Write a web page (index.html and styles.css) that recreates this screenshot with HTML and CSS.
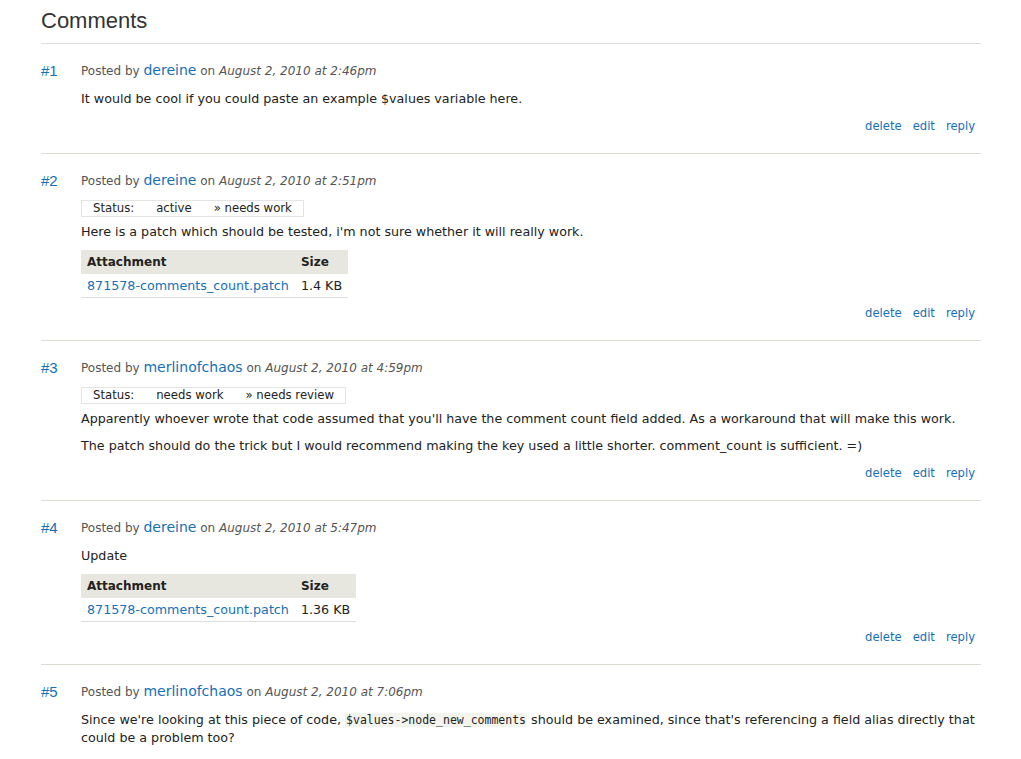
FILE: index.html
```html
<!DOCTYPE html>
<html>
<head>
<meta charset="utf-8">
<title>Comments</title>
<link rel="stylesheet" href="styles.css">
</head>
<body>
<div class="page">
  <h2 class="title">Comments</h2>

  <div class="comment">
    <a class="num" href="#">#1</a>
    <div class="content">
      <div class="meta">Posted by <a class="user" href="#">dereine</a> on <em>August 2, 2010 at 2:46pm</em></div>
      <p>It would be cool if you could paste an example $values variable here.</p>
      <ul class="links"><li><a href="#">delete</a></li><li><a href="#">edit</a></li><li><a href="#">reply</a></li></ul>
    </div>
  </div>

  <div class="comment">
    <a class="num" href="#">#2</a>
    <div class="content">
      <div class="meta">Posted by <a class="user" href="#">dereine</a> on <em>August 2, 2010 at 2:51pm</em></div>
      <table class="status"><tr><td>Status:</td><td>active</td><td>» needs work</td></tr></table>
      <p>Here is a patch which should be tested, i'm not sure whether it will really work.</p>
      <table class="files">
        <thead><tr><th>Attachment</th><th>Size</th></tr></thead>
        <tbody><tr><td><a href="#">871578-comments_count.patch</a></td><td>1.4 KB</td></tr></tbody>
      </table>
      <ul class="links"><li><a href="#">delete</a></li><li><a href="#">edit</a></li><li><a href="#">reply</a></li></ul>
    </div>
  </div>

  <div class="comment">
    <a class="num" href="#">#3</a>
    <div class="content">
      <div class="meta">Posted by <a class="user" href="#">merlinofchaos</a> on <em>August 2, 2010 at 4:59pm</em></div>
      <table class="status"><tr><td>Status:</td><td>needs work</td><td>» needs review</td></tr></table>
      <p>Apparently whoever wrote that code assumed that you'll have the comment count field added. As a workaround that will make this work.</p>
      <p>The patch should do the trick but I would recommend making the key used a little shorter. comment_count is sufficient. =)</p>
      <ul class="links"><li><a href="#">delete</a></li><li><a href="#">edit</a></li><li><a href="#">reply</a></li></ul>
    </div>
  </div>

  <div class="comment">
    <a class="num" href="#">#4</a>
    <div class="content">
      <div class="meta">Posted by <a class="user" href="#">dereine</a> on <em>August 2, 2010 at 5:47pm</em></div>
      <p>Update</p>
      <table class="files">
        <thead><tr><th>Attachment</th><th>Size</th></tr></thead>
        <tbody><tr><td><a href="#">871578-comments_count.patch</a></td><td>1.36 KB</td></tr></tbody>
      </table>
      <ul class="links"><li><a href="#">delete</a></li><li><a href="#">edit</a></li><li><a href="#">reply</a></li></ul>
    </div>
  </div>

  <div class="comment">
    <a class="num" href="#">#5</a>
    <div class="content">
      <div class="meta">Posted by <a class="user" href="#">merlinofchaos</a> on <em>August 2, 2010 at 7:06pm</em></div>
      <p>Since we're looking at this piece of code, <code>$values-&gt;node_new_comments</code> should be examined, since that's referencing a field alias directly that could be a problem too?</p>
    </div>
  </div>
</div>
</body>
</html>
```

FILE: styles.css
```css
html, body {
  margin: 0;
  padding: 0;
  background: #fff;
}

body {
  font-family: "DejaVu Sans", "Liberation Sans", sans-serif;
  font-size: 12.7px;
  line-height: 18px;
  color: #222;
}

a {
  color: #1570b8;
  text-decoration: none;
}

.page {
  width: 940px;
  margin-left: 41px;
}

.title {
  margin: 0;
  padding: 8px 0 9px;
  font-family: "Liberation Sans", Arial, sans-serif;
  font-size: 22px;
  line-height: 26px;
  font-weight: normal;
  color: #333;
  border-bottom: 1px solid #ddd;
}

.comment {
  display: flex;
  padding: 18px 0 18px;
  border-bottom: 1px solid #dcdcd4;
}

.comment:last-child {
  border-bottom: none;
}

.num {
  flex: 0 0 40px;
  font-family: "Liberation Sans", Arial, sans-serif;
  font-size: 15px;
  line-height: 18px;
}

.content {
  flex: 1;
  min-width: 0;
}

.meta {
  color: #555;
  font-size: 12px;
  line-height: 19px;
  margin-bottom: 9px;
}

.meta .user {
  font-size: 14px;
  line-height: 14px;
}

.meta em {
  font-style: italic;
}

.content p {
  margin: 0 0 9px;
}

code {
  font-family: "DejaVu Sans Mono", "Liberation Mono", monospace;
  font-size: 11.5px;
  background: #f4f4ee;
  padding: 0 1px;
}

.status {
  border-collapse: collapse;
  border: 1px solid #e4e4e4;
  margin: 1px 0 6px;
  font-size: 11.7px;
  line-height: 15px;
}

.status td {
  padding: 0 11px;
}

.files {
  border-collapse: collapse;
  margin: 0 0 6px;
}

.files th {
  background: #e8e7df;
  text-align: left;
  font-weight: bold;
  font-size: 12px;
  padding: 3px 6px 3px;
  line-height: 18px;
}

.files td {
  padding: 3px 6px 2px;
  border-bottom: 1px solid #ddd;
}

.links {
  list-style: none;
  margin: 0;
  padding: 0 6px 0 0;
  display: flex;
  justify-content: flex-end;
  gap: 11px;
  font-size: 11.6px;
}
```
